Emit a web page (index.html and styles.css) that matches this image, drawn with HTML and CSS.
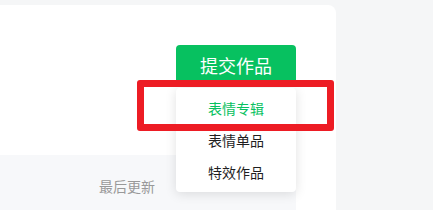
FILE: index.html
```html
<!DOCTYPE html>
<html lang="zh-CN">
<head>
<meta charset="utf-8">
<title>提交作品</title>
<link rel="stylesheet" href="styles.css">
</head>
<body>
<div class="card">
  <div class="top">
    <div class="submit-wrap">
      <button class="submit-btn">提交作品</button>
      <ul class="menu">
        <li class="menu-item active">表情专辑</li>
        <li class="menu-item">表情单品</li>
        <li class="menu-item">特效作品</li>
      </ul>
    </div>
  </div>
  <div class="table-head">
    <span class="col-updated">最后更新</span>
  </div>
</div>
<div class="highlight"></div>
</body>
</html>
```
FILE: styles.css
```css
* { box-sizing: border-box; }
html, body {
  margin: 0;
  padding: 0;
  width: 433px;
  height: 210px;
  overflow: hidden;
  background: #f5f6f7;
  font-family: "Noto Sans CJK SC", "Noto Sans", sans-serif;
}
body { position: relative; }
.card {
  margin-top: 5px;
  width: 336px;
  height: 205px;
  background: #ffffff;
  border-top-right-radius: 8px;
  display: flex;
  flex-direction: column;
}
.top {
  height: 150px;
  display: flex;
  justify-content: flex-end;
  padding: 40px 40px 0 0;
}
.submit-wrap {
  position: relative;
  width: 120px;
  height: 40px;
}
.submit-btn {
  width: 120px;
  height: 40px;
  border: 0;
  border-radius: 4px;
  background: #07c160;
  color: #ffffff;
  font-family: inherit;
  font-size: 18px;
  line-height: 40px;
  padding: 0;
}
.menu {
  position: absolute;
  top: 43px;
  left: 0;
  width: 120px;
  margin: 0;
  padding: 4px 0;
  list-style: none;
  background: #ffffff;
  border-radius: 4px;
  box-shadow: 0 2px 12px rgba(0, 0, 0, 0.12);
}
.menu-item {
  height: 32px;
  line-height: 32px;
  text-align: center;
  font-size: 14px;
  color: #1f1f1f;
}
.menu-item.active { color: #07c160; }
.table-head {
  flex: 1;
  width: 296px;
  background: #f7f8fa;
  padding: 18px 0 0 99px;
}
.col-updated {
  font-size: 14px;
  line-height: 20px;
  color: #999999;
}
.highlight {
  position: absolute;
  left: 137px;
  top: 80px;
  width: 197px;
  height: 51px;
  border: 7px solid #ed1c24;
  border-radius: 3px;
}
```
